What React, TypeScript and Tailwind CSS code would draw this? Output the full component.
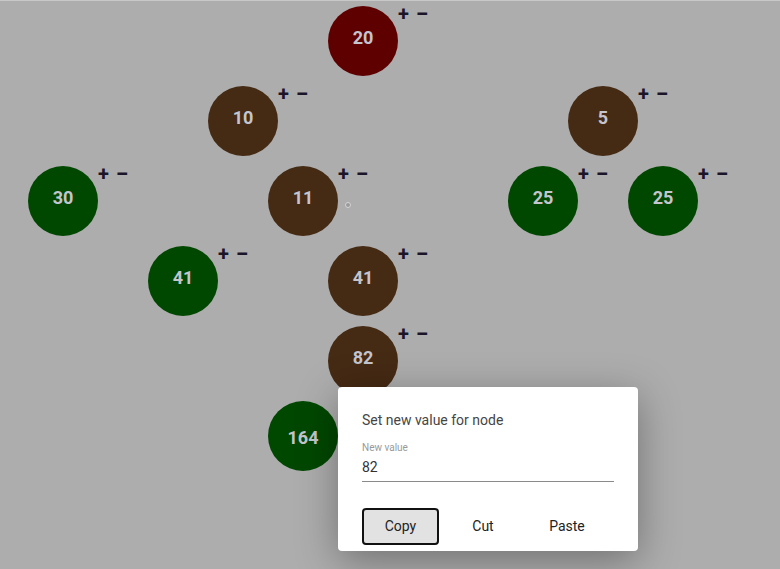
import React from "react";

type Node = {
  id: number;
  value: number;
  x: number;
  y: number;
  color: string;
  controls?: boolean;
};

const nodes: Node[] = [
  { id: 1, value: 20, x: 363, y: 41, color: "bg-[#5e0000]" },
  { id: 2, value: 10, x: 243, y: 121, color: "bg-[#452a14]" },
  { id: 3, value: 5, x: 603, y: 121, color: "bg-[#452a14]" },
  { id: 4, value: 30, x: 63, y: 201, color: "bg-[#004700]" },
  { id: 5, value: 11, x: 303, y: 201, color: "bg-[#452a14]" },
  { id: 6, value: 25, x: 543, y: 201, color: "bg-[#004700]" },
  { id: 7, value: 25, x: 663, y: 201, color: "bg-[#004700]" },
  { id: 8, value: 41, x: 183, y: 281, color: "bg-[#004700]" },
  { id: 9, value: 41, x: 363, y: 281, color: "bg-[#452a14]" },
  { id: 10, value: 82, x: 363, y: 361, color: "bg-[#452a14]" },
  { id: 11, value: 164, x: 303, y: 436, color: "bg-[#004700]", controls: false },
];

function TreeNode({ node }: { node: Node }) {
  const hasControls = node.controls !== false;
  return (
    <>
      <div
        className={`absolute w-[70px] h-[70px] rounded-full ${node.color} flex items-center justify-center ${
          hasControls ? "pb-[8px]" : "pt-[2px]"
        } text-[18px] font-bold text-[#c4c5ce]`}
        style={{ left: node.x - 35, top: node.y - 35 }}
      >
        {node.value}
      </div>
      {hasControls && (
        <div
          className="absolute flex items-center h-[20px] font-bold leading-none text-[#1c1428]"
          style={{ left: node.x + 35, top: node.y - 37 }}
        >
          <span className="text-[20px]">+</span>
          <span className="text-[23px] ml-[7px]">−</span>
        </div>
      )}
    </>
  );
}

export default function App() {
  return (
    <div
      className="relative w-[780px] h-[569px] overflow-hidden bg-[#adadad]"
      style={{ fontFamily: "Roboto, 'Liberation Sans', sans-serif" }}
    >
      <div className="h-px bg-[#c8c8c8]" />
      {nodes.map((n) => (
        <TreeNode key={n.id} node={n} />
      ))}

      <div className="absolute left-[345px] top-[202px] w-[6px] h-[6px] rounded-full border border-[#d4d4d4] bg-[#9a9a9a]" />

      {/* node value dialog */}
      <div className="absolute left-[338px] top-[387px] w-[300px] h-[164px] bg-white rounded-[4px] shadow-[0_10px_40px_rgba(0,0,0,0.35)] px-6 pt-[24px]">
        <p className="text-[14px] text-[#454545] leading-[18px]">Set new value for node</p>
        <div className="mt-[12px] border-b border-[#8a8a8a] pb-[5px]">
          <p className="text-[10px] text-[#9a9a9a] leading-[13px]">New value</p>
          <p className="text-[14px] text-[#333] leading-[18px] mt-[4px]">82</p>
        </div>
        <div className="flex items-center mt-[26px] text-[14px] text-[#222]">
          <button className="w-[77px] h-[37px] bg-[#e2e2e2] border-2 border-[#111] rounded-[4px]">
            Copy
          </button>
          <button className="w-[88px] h-[37px]">Cut</button>
          <button className="w-[80px] h-[37px]">Paste</button>
        </div>
      </div>
    </div>
  );
}
